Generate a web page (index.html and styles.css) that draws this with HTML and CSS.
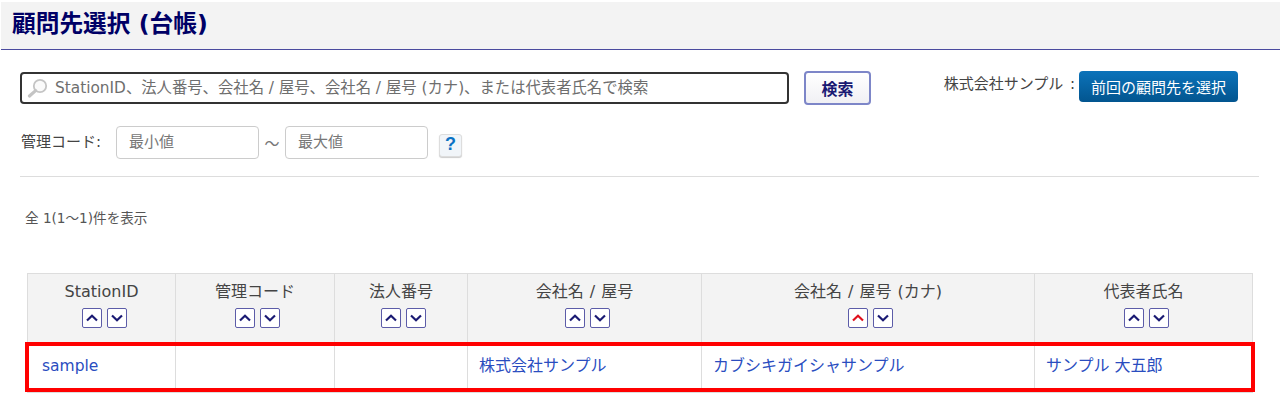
FILE: index.html
```html
<!DOCTYPE html>
<html lang="ja">
<head>
<meta charset="utf-8">
<title>顧問先選択 (台帳)</title>
<link rel="stylesheet" href="styles.css">
</head>
<body>
<header class="page-head"><h1 class="page-title">顧問先選択 (台帳)</h1></header>
<main class="content">
  <div class="search-row">
    <div class="search-box">
      <svg class="search-icon" width="22" height="20" viewBox="0 0 22 20"><circle cx="13" cy="8" r="6.2" fill="#fafafa" stroke="#c4c4c4" stroke-width="1.8"/><path d="M8.6 12.6 2.5 18" stroke="#c4c4c4" stroke-width="3.2" stroke-linecap="round"/></svg>
      <span class="search-placeholder">StationID、法人番号、会社名 / 屋号、会社名 / 屋号 (カナ)、または代表者氏名で検索</span>
    </div>
    <button class="search-btn">検索</button>
    <div class="prev">
      <span class="prev-label">株式会社サンプル :</span>
      <button class="prev-btn">前回の顧問先を選択</button>
    </div>
  </div>
  <div class="code-row">
    <span class="code-label">管理コード:</span>
    <span class="range-input"><span class="range-text">最小値</span></span>
    <span class="tilde">～</span>
    <span class="range-input"><span class="range-text">最大値</span></span>
    <button class="help-btn">?</button>
  </div>
  <hr class="divider">
  <p class="count">全 1(1～1)件を表示</p>
  <div class="table-wrap">
    <table class="result">
      <thead>
        <tr>
          <th class="c1">StationID<div class="sort"><a class="sort-btn"><svg width="12" height="8" viewBox="0 0 12 8"><path d="M1 6.500 6 1.800l5 4.700" class="chev"/></svg></a><a class="sort-btn"><svg width="12" height="8" viewBox="0 0 12 8"><path d="M1 1.500 6 6.200l5-4.700" class="chev"/></svg></a></div></th>
          <th class="c2">管理コード<div class="sort"><a class="sort-btn"><svg width="12" height="8" viewBox="0 0 12 8"><path d="M1 6.500 6 1.800l5 4.700" class="chev"/></svg></a><a class="sort-btn"><svg width="12" height="8" viewBox="0 0 12 8"><path d="M1 1.500 6 6.200l5-4.700" class="chev"/></svg></a></div></th>
          <th class="c3">法人番号<div class="sort"><a class="sort-btn"><svg width="12" height="8" viewBox="0 0 12 8"><path d="M1 6.500 6 1.800l5 4.700" class="chev"/></svg></a><a class="sort-btn"><svg width="12" height="8" viewBox="0 0 12 8"><path d="M1 1.500 6 6.200l5-4.700" class="chev"/></svg></a></div></th>
          <th class="c4">会社名 / 屋号<div class="sort"><a class="sort-btn"><svg width="12" height="8" viewBox="0 0 12 8"><path d="M1 6.500 6 1.800l5 4.700" class="chev"/></svg></a><a class="sort-btn"><svg width="12" height="8" viewBox="0 0 12 8"><path d="M1 1.500 6 6.200l5-4.700" class="chev"/></svg></a></div></th>
          <th class="c5">会社名 / 屋号 (カナ)<div class="sort"><a class="sort-btn"><svg width="12" height="8" viewBox="0 0 12 8"><path d="M1 6.500 6 1.800l5 4.700" class="chev chev-active"/></svg></a><a class="sort-btn"><svg width="12" height="8" viewBox="0 0 12 8"><path d="M1 1.500 6 6.200l5-4.700" class="chev"/></svg></a></div></th>
          <th class="c6">代表者氏名<div class="sort"><a class="sort-btn"><svg width="12" height="8" viewBox="0 0 12 8"><path d="M1 6.500 6 1.800l5 4.700" class="chev"/></svg></a><a class="sort-btn"><svg width="12" height="8" viewBox="0 0 12 8"><path d="M1 1.500 6 6.200l5-4.700" class="chev"/></svg></a></div></th>
        </tr>
      </thead>
      <tbody>
        <tr>
          <td class="first-cell"><a class="link link-latin">sample</a></td>
          <td></td>
          <td></td>
          <td><a class="link">株式会社サンプル</a></td>
          <td><a class="link">カブシキガイシャサンプル</a></td>
          <td><a class="link">サンプル 大五郎</a></td>
        </tr>
      </tbody>
    </table>
    <div class="highlight"></div>
  </div>
</main>
</body>
</html>
```
FILE: styles.css
```css
* { box-sizing: border-box; }
html, body { margin: 0; padding: 0; background: #fff; overflow: hidden; }
body {
  height: 410px;
  padding-top: 2px;
  font-family: "DejaVu Sans", "Noto Sans CJK JP", sans-serif;
  color: #444;
}
.page-head {
  height: 48px;
  margin-left: 1px;
  background: #f3f3f3;
  border-bottom: 1px solid #4a4a9e;
  display: flex;
  align-items: center;
  padding-left: 11px;
}
.page-title {
  margin: 0 0 3px;
  font-size: 23.7px;
  line-height: 30px;
  font-weight: 700;
  color: #000066;
  font-family: "DejaVu Sans", "Noto Sans CJK JP", sans-serif;
}
.content { padding: 21px 21px 0 20px; }
.search-row { display: flex; align-items: flex-start; height: 34px; }
.search-box {
  width: 769px;
  height: 32px;
  margin-top: 1px;
  border: 2px solid #333;
  border-radius: 4px;
  display: flex;
  align-items: center;
  padding-left: 5px;
  background: #fff;
}
.search-icon { flex: none; margin-right: 6px; }
.search-placeholder { font-size: 15.35px; line-height: 22px; margin-bottom: 1px; color: #6e6e6e; white-space: nowrap; }
.search-btn {
  margin-left: 15px;
  width: 67px;
  height: 34px;
  border: 2px solid #7d86c8;
  border-radius: 4px;
  background: linear-gradient(#ffffff, #f0f0f4);
  color: #1a1a73;
  font: 700 16px "Noto Sans CJK JP", sans-serif;
  padding: 0;
}
.prev { margin-left: auto; margin-right: 21px; display: flex; align-items: flex-start; }
.prev-label { font-size: 15px; line-height: 26px; white-space: nowrap; color: #444; margin-right: 4px; word-spacing: 2px; }
.prev-btn {
  width: 159px;
  height: 31px;
  border: 0;
  border-radius: 4px;
  background: linear-gradient(#0c73ba, #02558f);
  color: #fff;
  font: 400 15px "Noto Sans CJK JP", sans-serif;
  padding: 0;
  white-space: nowrap;
}
.code-row { display: flex; align-items: center; margin-top: 21px; height: 33px; }
.code-label { font-size: 15px; line-height: 22px; margin: 0 0 2px 1px; width: 95px; white-space: nowrap; }
.range-input {
  width: 143px;
  height: 33px;
  border: 1px solid #ccc;
  border-radius: 4px;
  display: flex;
  align-items: center;
  padding-left: 12px;
  font-size: 15px;
  color: #777;
}
.range-text { line-height: 22px; margin-bottom: 2px; }
.tilde { width: 26px; text-align: center; font-size: 15px; color: #777; }
.help-btn {
  margin: 5px 0 0 11px;
  width: 23px;
  height: 23px;
  border: 1px solid #ddd;
  border-radius: 3px;
  background: #f1f5f9;
  color: #0a72c4;
  font: 700 18px "Liberation Sans", sans-serif;
  line-height: 19px;
  padding: 0 0 2px;
  box-shadow: 0 1px 1px #ccc;
}
.divider { border: 0; border-top: 1px solid #ddd; margin: 17px 0 0; }
.count { margin: 32px 0 0 5px; font-size: 13.6px; line-height: 18px; color: #555; }
.table-wrap { position: relative; margin: 46px 0 0 7px; width: 1225px; }
.result { border-collapse: collapse; table-layout: fixed; width: 1225px; font-size: 16px; }
.result th, .result td { border: 1px solid #ddd; }
.result th {
  height: 69px;
  background: #f3f3f3;
  font-weight: 400;
  color: #444;
  line-height: 22px;
  padding: 7px 0 0;
  vertical-align: top;
  text-align: center;
  word-spacing: 1px;
}
.result td { height: 50px; padding: 0 11px 4px; font-size: 16px; line-height: 22px; vertical-align: middle; }
.result .first-cell { padding-left: 14px; }
.c1 { width: 148px; }
.c2 { width: 159px; }
.c3 { width: 133px; }
.c4 { width: 234px; }
.c5 { width: 333px; }
.c6 { width: 218px; }
.sort { display: flex; justify-content: center; gap: 5px; margin-top: 5px; padding-left: 5px; }
.sort-btn {
  width: 20px;
  height: 20px;
  border: 1px solid #5c5ca8;
  border-radius: 2px;
  background: #fff;
  display: flex;
  align-items: center;
  justify-content: center;
}
.chev { fill: none; stroke: #1a1a73; stroke-width: 2.2; }
.chev-active { stroke: #e0101c; }
.link { color: #2a4dbf; white-space: nowrap; }
.link-latin { font-size: 15.5px; }
.highlight {
  position: absolute;
  left: -2px;
  right: -3px;
  top: 69px;
  height: 50px;
  border: 4px solid #f00;
  pointer-events: none;
}
```
